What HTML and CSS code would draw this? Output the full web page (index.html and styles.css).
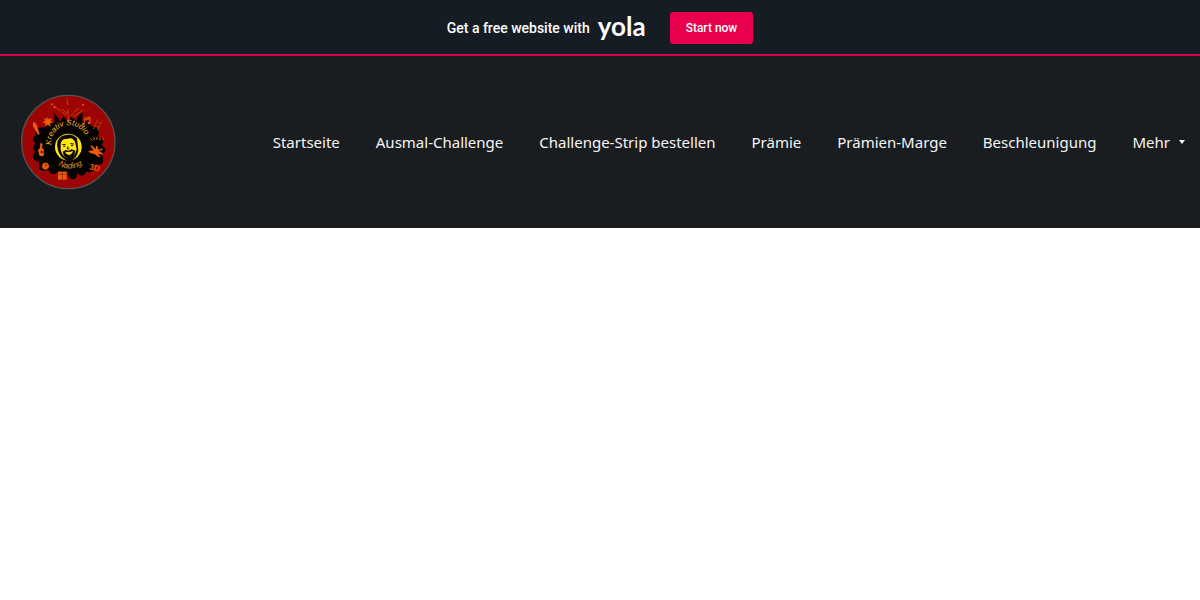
FILE: index.html
```
<!DOCTYPE html>
<html lang="de">
<head>
    <meta charset="UTF-8">
    <meta name="viewport" content="width=device-width, initial-scale=1.0">
    <title>Kreativ Studio Nading</title>
    <link rel="stylesheet" href="styles.css">
</head>
<body>

    <div class="promo-bar">
        <span class="promo-text">Get a free website with</span>
        <a href="#" class="promo-logo">yola</a>
        <button type="button" class="start-btn">Start now</button>
    </div>

    <header class="site-header">
        <a href="#" class="logo" aria-label="Kreativ Studio Nading">
            <svg viewBox="18 16 288 288" width="96" height="96">
                <defs>
                    <path id="arc-top" d="M112 169 A53 53 0 0 1 219 158"/>
                    <path id="arc-bottom" d="M133 230 Q170 252 212 224"/>
                </defs>
                <circle cx="163" cy="160" r="140" fill="#9d0505" stroke="#59524f" stroke-width="4"/>
                <!-- black splash -->
                <path fill="#050302" d="M163 102 L148 82 L139 98 L121 72 L121 104 Q96 91 92 117 Q65 111 64 139 Q51 150 64 165 Q52 178 64 188 Q45 215 76 219 Q69 255 103 243 Q112 266 133 249 L159 249 Q163 275 181 271 Q190 268 188 252 Q206 272 217 249 Q243 256 242 229 Q278 230 264 199 Q285 184 263 170 Q278 151 252 143 Q262 114 231 113 Q228 87 204 98 L207 72 Q190 78 187 97 L172 80 Z"/>
                <!-- fireworks -->
                <g fill="none" stroke="#c94305" stroke-width="3">
                    <path d="M164 100 L161 62 M157 80 L117 50 M169 85 L190 62 L198 58 M161 49 L159 27" stroke-dasharray="17 3"/>
                    <path d="M159 74 L143 61 M175 87 L206 65"/>
                </g>
                <g fill="#ed5b0b">
                    <circle cx="113" cy="47" r="3"/>
                    <circle cx="122" cy="56" r="3"/>
                    <circle cx="207" cy="48" r="3"/>
                    <!-- brush, star, guitar, palette -->
                    <path d="M57 101 Q66 99 68 109 L77 136 L72 138 L57 113 Z"/>
                    <path d="M101 84 L104 92 L114 88 L110 97 L118 102 L108 104 L110 114 L101 108 L94 114 L94 104 L85 101 L94 96 L89 87 L99 92 Z"/>
                    <path d="M79 163 L86 165 L84 178 Q94 184 88 190 Q94 200 84 203 Q73 203 75 193 Q68 183 78 179 Z"/>
                    <path d="M86 225 Q99 216 105 229 Q106 241 94 243 Q81 241 85 229 Z"/>
                    <!-- gift -->
                    <path d="M132 249 H158 V273 H132 Z"/>
                    <!-- hand -->
                    <path d="M222 187 L239 185 L229 172 L233 170 L246 182 L246 171 L250 172 L253 184 L265 179 L266 183 L255 188 L267 194 L265 198 L252 195 L260 206 L254 205 L240 195 Q230 197 222 187 Z"/>
                </g>
                <path d="M145 249 V273 M132 257 H158" stroke="#842505" stroke-width="2"/>
                <circle cx="83" cy="190" r="3" fill="#160600"/>
                <circle cx="96" cy="230" r="3" fill="#8d2300"/>
                <g fill="none" stroke="#ed5b0b" stroke-width="4">
                    <path d="M211 105 V90 L228 85 V102 M211 95 L228 90" stroke-width="3"/>
                    <path d="M238 121 L252 90 M250 126 L264 96 M242 110 L256 116 M247 99 L261 105" stroke="#bc3205" stroke-width="3"/>
                    <path d="M229 149 L235 155 M239 145 L241 154 M249 145 V154 M259 146 L257 155 M270 148 L265 155" stroke-width="3"/>
                </g>
                <circle cx="208" cy="106" r="4" fill="#ed5b0b"/>
                <circle cx="225" cy="103" r="4" fill="#ed5b0b"/>
                <text x="225" y="242" class="logo-number" transform="rotate(12 225 242)">3D</text>
                <!-- portrait -->
                <circle cx="163" cy="175" r="40" fill="#ffe512"/>
                <path fill="#080502" d="M132 185 Q122 152 145 142 Q172 130 189 149 L193 184 Q190 211 165 218 Q139 211 132 185 Z"/>
                <path fill="#ffe512" d="M140 165 Q142 149 159 151 Q178 144 184 163 L188 182 Q182 207 165 211 Q145 205 140 184 Z"/>
                <path fill="none" stroke="#100b02" stroke-width="3" d="M145 168 L155 167 M169 165 L180 166 M148 173 H154 M171 171 H177 M162 173 L160 180 L166 181"/>
                <path fill="#100b02" d="M146 189 L155 184 L164 186 L173 182 L184 186 Q181 209 165 214 Q150 208 146 189 Z"/>
                <path fill="#ffe512" d="M153 189 Q165 192 177 187 Q174 198 165 199 Q156 197 153 189 Z"/>
                <text class="logo-text"><textPath href="#arc-top">Kreativ Studio</textPath></text>
                <text class="logo-text logo-name"><textPath href="#arc-bottom">Nading</textPath></text>
            </svg>
        </a>
        <nav class="main-nav">
            <a href="#">Startseite</a>
            <a href="#">Ausmal-Challenge</a>
            <a href="#">Challenge-Strip bestellen</a>
            <a href="#">Prämie</a>
            <a href="#">Prämien-Marge</a>
            <a href="#">Beschleunigung</a>
            <button type="button" class="more-btn">Mehr
                <svg viewBox="0 0 8 5" width="8" height="5"><path d="M1 0h6L4 4z" fill="#fff"/></svg>
            </button>
        </nav>
    </header>

</body>
</html>
```
FILE: styles.css
```
body {
    margin: 0;
    background: #fff;
    font-family: "Noto Sans", sans-serif;
}
a {
    color: inherit;
    text-decoration: none;
}
button {
    border: none;
    cursor: pointer;
    color: #fff;
}
.promo-bar {
    display: flex;
    justify-content: center;
    align-items: center;
    padding: 12px 0 10px;
    background: #151c23;
    border-bottom: 2px solid #d1074a;
    color: #fff;
    font-family: Roboto, sans-serif;
}
.promo-text {
    font-size: 14px;
    font-weight: 500;
}
.promo-logo {
    margin: 0 24px 0 8px;
    padding-bottom: 4px;
    font-family: Lato, sans-serif;
    font-size: 26px;
    font-weight: bold;
    line-height: 28px;
}
.start-btn {
    padding: 0 16px;
    height: 32px;
    border-radius: 3px;
    background: #e8004c;
    font-family: inherit;
    font-size: 12px;
    font-weight: 500;
}
.site-header {
    display: flex;
    justify-content: space-between;
    align-items: center;
    padding: 38px 14px 38px 20px;
    background: #1a1d1f;
    color: #f5f5f5;
}
.logo svg {
    display: block;
}
.logo-text {
    fill: #f0b42e;
    font-family: "Liberation Sans", sans-serif;
    font-size: 24px;
    font-style: italic;
}
.logo-name {
    fill: #e0952a;
}
.logo-number {
    fill: #ed5b0b;
    font-family: "Liberation Sans", sans-serif;
    font-size: 25px;
    font-weight: bold;
}
.main-nav {
    display: flex;
    align-items: center;
    gap: 36px;
    font-size: 15px;
    white-space: nowrap;
}
.more-btn {
    display: flex;
    align-items: center;
    gap: 8px;
    padding: 0;
    background: none;
    color: inherit;
    font: inherit;
}
```
